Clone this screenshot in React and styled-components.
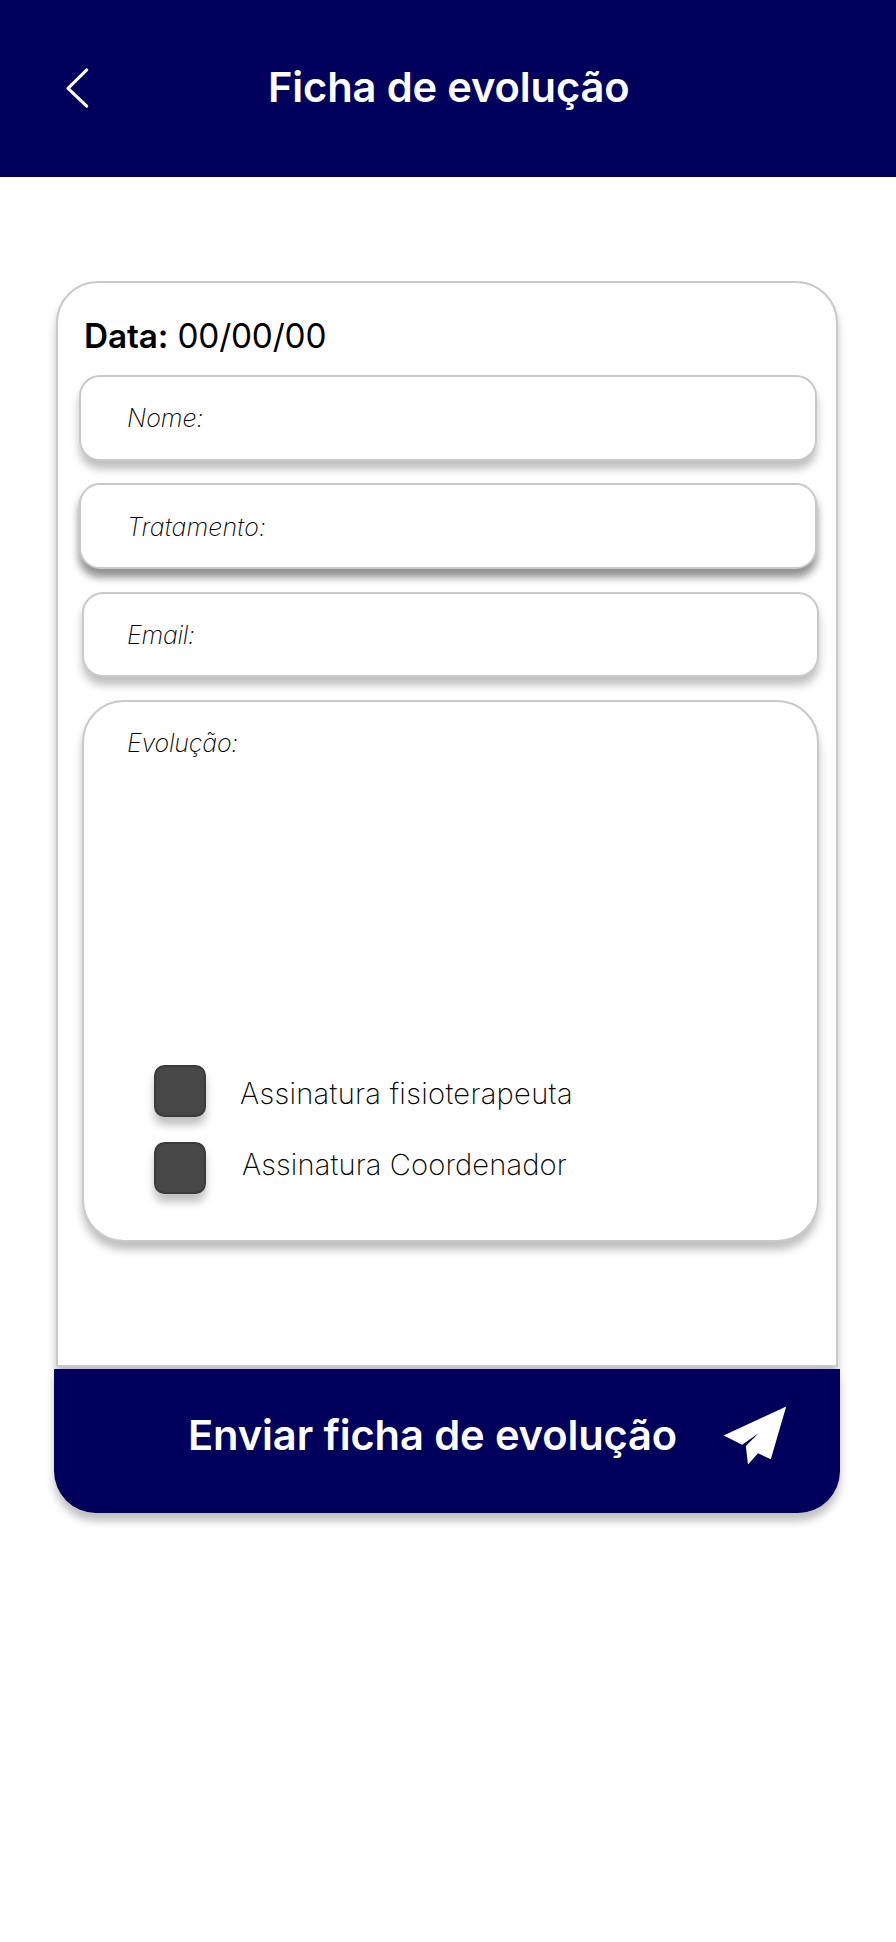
import React from "react";
import styled, { createGlobalStyle, css } from "styled-components";

const GlobalStyle = createGlobalStyle`
  *, *::before, *::after { box-sizing: border-box; }
  body {
    margin: 0;
    background: #fff;
    color: #000;
    font-family: Inter, "Liberation Sans", sans-serif;
  }
`;

const navy = "#00005c";
const softShadow = "0 8px 8px rgba(0, 0, 0, 0.25)";

const Screen = styled.div`
  width: 896px;
  min-height: 1942px;
  background: #fff;
`;

const Header = styled.header`
  display: flex;
  align-items: center;
  height: 177px;
  padding-left: 64px;
  background: ${navy};
  color: #fff;
`;

const BackButton = styled.button`
  display: flex;
  width: 28px;
  height: 44px;
  margin-bottom: 2px;
  padding: 0;
  border: 0;
  background: none;
  color: inherit;
`;

const Title = styled.h1`
  margin: 0 0 3px 176px;
  font-size: 41.67px;
  font-weight: 600;
  letter-spacing: -0.15px;
  line-height: 50px;
  white-space: nowrap;
`;

const Form = styled.form`
  display: flex;
  flex-direction: column;
  width: 786px;
  margin: 104px 0 0 54px;
`;

const Card = styled.section`
  display: flex;
  flex-direction: column;
  width: 782px;
  height: 1086px;
  margin-left: 2px;
  padding: 33px 0 0 21px;
  border: 2px solid #c9c9c9;
  border-radius: 42px 42px 0 0;
  background: #fff;
  box-shadow: ${softShadow};
`;

const DateLine = styled.p`
  margin: 0 0 19px 5px;
  font-size: 33.34px;
  letter-spacing: -0.15px;
  line-height: 40px;
  white-space: nowrap;

  b { font-weight: 600; }
`;

const surface = css`
  width: ${(p) => (p.$shift ? 737 : 738)}px;
  border: 2px solid #c9c9c9;
  background: #fff;
  margin-left: ${(p) => (p.$shift ? 3 : 0)}px;
`;

const Label = styled.span`
  font-size: 25px;
  font-style: italic;
  font-weight: 200;
  letter-spacing: ${(p) => p.$track || 0}px;
  line-height: 30px;
  white-space: nowrap;
`;

const Field = styled.label`
  ${surface}
  display: flex;
  align-items: center;
  height: ${(p) => p.$height || 86}px;
  margin-bottom: ${(p) => p.$gap}px;
  padding-top: ${(p) => (p.$strong ? 2 : 0)}px;
  padding-left: ${(p) => (p.$shift ? 43 : 46)}px;
  border-radius: 21px;
  box-shadow: ${softShadow}${(p) => (p.$strong ? `, ${softShadow}` : "")};
`;

const Notes = styled.div`
  ${surface}
  height: 542px;
  padding: 26px 0 0 43px;
  border-radius: 42px;
  box-shadow: ${softShadow};
`;

const Signatures = styled.div`
  display: flex;
  gap: 34px;
  margin: 307px 0 0 27px;
`;

const Boxes = styled.div`
  display: flex;
  flex-direction: column;
  gap: 25px;
`;

const Checkbox = styled.span`
  width: 52px;
  height: 52px;
  border: 2px solid #3b3b3b;
  border-radius: 10.5px;
  background: #474747;
  box-shadow: ${softShadow};
`;

const Names = styled.div`
  display: flex;
  flex-direction: column;
  gap: 36px;
  padding-top: 11px;
`;

const Signer = styled.span`
  margin-left: ${(p) => p.$indent || 0}px;
  font-size: 29.17px;
  font-weight: 200;
  letter-spacing: ${(p) => p.$track}px;
  line-height: 35px;
  white-space: nowrap;
`;

const Submit = styled.button`
  display: flex;
  align-items: center;
  width: 786px;
  height: 144px;
  margin-top: 2px;
  padding: 0 0 12px 134px;
  border: 0;
  border-radius: 0 0 42px 42px;
  background: ${navy};
  box-shadow: ${softShadow};
  color: #fff;
  font: 600 41.67px/50px Inter, "Liberation Sans", sans-serif;
  letter-spacing: -0.13px;
  white-space: nowrap;
`;

const Plane = styled.svg`
  width: 64px;
  height: 60px;
  margin: 2px 53px 0 auto;
`;

export default function App() {
  return (
    <Screen>
      <GlobalStyle />
      <Header>
        <BackButton aria-label="Voltar">
          <svg width="28" height="44" viewBox="0 0 28 44" fill="none">
            <path d="M22.7 3.9 4 22.3 22.7 40.2" stroke="currentColor" strokeWidth="3.1" strokeLinecap="round" strokeLinejoin="round" />
          </svg>
        </BackButton>
        <Title>Ficha de evolução</Title>
      </Header>
      <Form onSubmit={(e) => e.preventDefault()}>
        <Card>
          <DateLine><b>Data:</b> 00/00/00</DateLine>
          <Field $gap={22}><Label>Nome:</Label></Field>
          <Field $gap={23} $strong><Label $track={0.17}>Tratamento:</Label></Field>
          <Field $gap={23} $height={85} $shift><Label $track={-0.3}>Email:</Label></Field>
          <Notes $shift>
            <Label $track={-0.25}>Evolução:</Label>
            <Signatures>
              <Boxes><Checkbox /><Checkbox /></Boxes>
              <Names>
                <Signer $track={0.28}>Assinatura fisioterapeuta</Signer>
                <Signer $track={0.1} $indent={2}>Assinatura Coordenador</Signer>
              </Names>
            </Signatures>
          </Notes>
        </Card>
        <Submit>
          Enviar ficha de evolução
          <Plane viewBox="0 0 64 60" fill="currentColor" aria-hidden="true">
            <path d="M63.2.6 47.8 53.3 35 47.3 25 58.6 22.8 40 35.8 26.9 19.2 38.8.6 29.5Z" />
          </Plane>
        </Submit>
      </Form>
    </Screen>
  );
}
